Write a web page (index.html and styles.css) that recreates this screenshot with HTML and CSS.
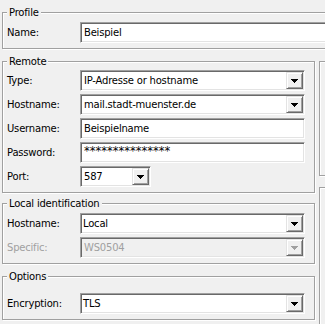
FILE: index.html
```html
<!DOCTYPE html>
<html lang="de">
<head>
    <meta charset="UTF-8">
    <title>Account settings</title>
    <link rel="stylesheet" href="styles.css">
</head>
<body>
    <div class="page">
        <div class="group profile">
            <span class="group-title">Profile</span>
            <div class="rows">
                <label>Name:</label>
                <div class="field">Beispiel</div>
            </div>
        </div>

        <div class="columns">
            <div class="left">
                <div class="group remote">
                    <span class="group-title">Remote</span>
                    <div class="rows">
                        <label>Type:</label>
                        <div class="field combo"><span>IP-Adresse or hostname</span><span class="drop"><svg width="7" height="4" shape-rendering="crispEdges"><path d="M0 0h7v1h-1v1h-1v1h-1v1h-1v-1h-1v-1h-1v-1h-1z"/></svg></span></div>
                        <label>Hostname:</label>
                        <div class="field combo"><span>mail.stadt-muenster.de</span><span class="drop"><svg width="7" height="4" shape-rendering="crispEdges"><path d="M0 0h7v1h-1v1h-1v1h-1v1h-1v-1h-1v-1h-1v-1h-1z"/></svg></span></div>
                        <label>Username:</label>
                        <div class="field">Beispielname</div>
                        <label>Password:</label>
                        <div class="field secret"><span>***************</span></div>
                        <label>Port:</label>
                        <div class="field combo port"><span>587</span><span class="drop"><svg width="7" height="4" shape-rendering="crispEdges"><path d="M0 0h7v1h-1v1h-1v1h-1v1h-1v-1h-1v-1h-1v-1h-1z"/></svg></span></div>
                    </div>
                </div>

                <div class="group local">
                    <span class="group-title">Local identification</span>
                    <div class="rows">
                        <label>Hostname:</label>
                        <div class="field combo editable"><span>Local</span><span class="drop"><svg width="7" height="4" shape-rendering="crispEdges"><path d="M0 0h7v1h-1v1h-1v1h-1v1h-1v-1h-1v-1h-1v-1h-1z"/></svg></span></div>
                        <label class="disabled">Specific:</label>
                        <div class="field combo disabled"><span>WS0504</span><span class="drop"><svg width="7" height="4" shape-rendering="crispEdges"><path d="M0 0h7v1h-1v1h-1v1h-1v1h-1v-1h-1v-1h-1v-1h-1z"/></svg></span></div>
                    </div>
                </div>

                <div class="group options">
                    <span class="group-title">Options</span>
                    <div class="rows">
                        <label>Encryption:</label>
                        <div class="field combo editable"><span>TLS</span><span class="drop"><svg width="7" height="4" shape-rendering="crispEdges"><path d="M0 0h7v1h-1v1h-1v1h-1v1h-1v-1h-1v-1h-1v-1h-1z"/></svg></span></div>
                    </div>
                </div>
            </div>

            <div class="right">
                <div class="group side-top"></div>
                <div class="group side-bottom"></div>
            </div>
        </div>
    </div>
</body>
</html>
```

FILE: styles.css
```css
body {
    margin: 0;
    background-color: #f0f0f0;
    font-family: "DejaVu Sans", sans-serif;
    font-size: 10px;
    letter-spacing: -0.2px;
    color: #000;
    overflow: hidden;
}

.page {
    width: 700px;
    padding: 12px 0 0 2px;
}

/* etched group frame */
.group {
    position: relative;
    box-sizing: border-box;
    border: 1px solid #a0a0a0;
    box-shadow: inset 1px 1px 0 #fff, 1px 1px 0 #fff;
    padding: 8px 9px 5px 4px;
}

.group-title {
    position: absolute;
    top: -7px;
    left: 4px;
    padding: 0 2px;
    line-height: 13px;
    background-color: #f0f0f0;
}

.profile {
    width: 640px;
    padding-top: 9px;
}

.columns {
    display: flex;
    gap: 4px;
    margin-top: 12px;
    align-items: flex-start;
}

.left {
    width: 313px;
    display: flex;
    flex-direction: column;
}

.local {
    margin-top: 10px;
    padding-top: 9px;
}

.options {
    margin-top: 12px;
    padding-top: 16px;
}

.right {
    width: 200px;
    display: flex;
    flex-direction: column;
}

.side-top {
    height: 115px;
}

.side-bottom {
    height: 200px;
    margin-top: 11px;
}

.rows {
    display: grid;
    grid-template-columns: 73px 1fr;
    row-gap: 3px;
    align-items: center;
}

label.disabled {
    color: #a0a0a0;
}

/* sunken edit box */
.field {
    height: 21px;
    box-sizing: border-box;
    display: flex;
    align-items: center;
    padding-left: 3px;
    border: 1px solid;
    border-color: #a0a0a0 #fff #fff #a0a0a0;
    box-shadow: inset 1px 1px 0 #696969, inset -1px -1px 0 #e3e3e3;
    background-color: #fff;
    white-space: nowrap;
    overflow: hidden;
}

.field.secret {
    align-items: flex-start;
    padding-top: 2px;
    font-size: 11.5px;
    letter-spacing: 0;
    line-height: 13px;
}

.combo.editable {
    padding-left: 2px;
}

.combo.port {
    width: 71px;
}

.combo.disabled {
    background-color: #f0f0f0;
    color: #a0a0a0;
}

.drop {
    margin-left: auto;
    margin-right: 1px;
    width: 17px;
    height: 17px;
    flex-shrink: 0;
    box-sizing: border-box;
    display: flex;
    align-items: center;
    justify-content: center;
    border: 1px solid;
    border-color: #e3e3e3 #696969 #696969 #e3e3e3;
    box-shadow: inset 1px 1px 0 #fff, inset -1px -1px 0 #a0a0a0;
    background-color: #f0f0f0;
}

.drop svg {
    display: block;
    fill: #000;
}

.combo.disabled .drop svg {
    fill: #a0a0a0;
}
```
